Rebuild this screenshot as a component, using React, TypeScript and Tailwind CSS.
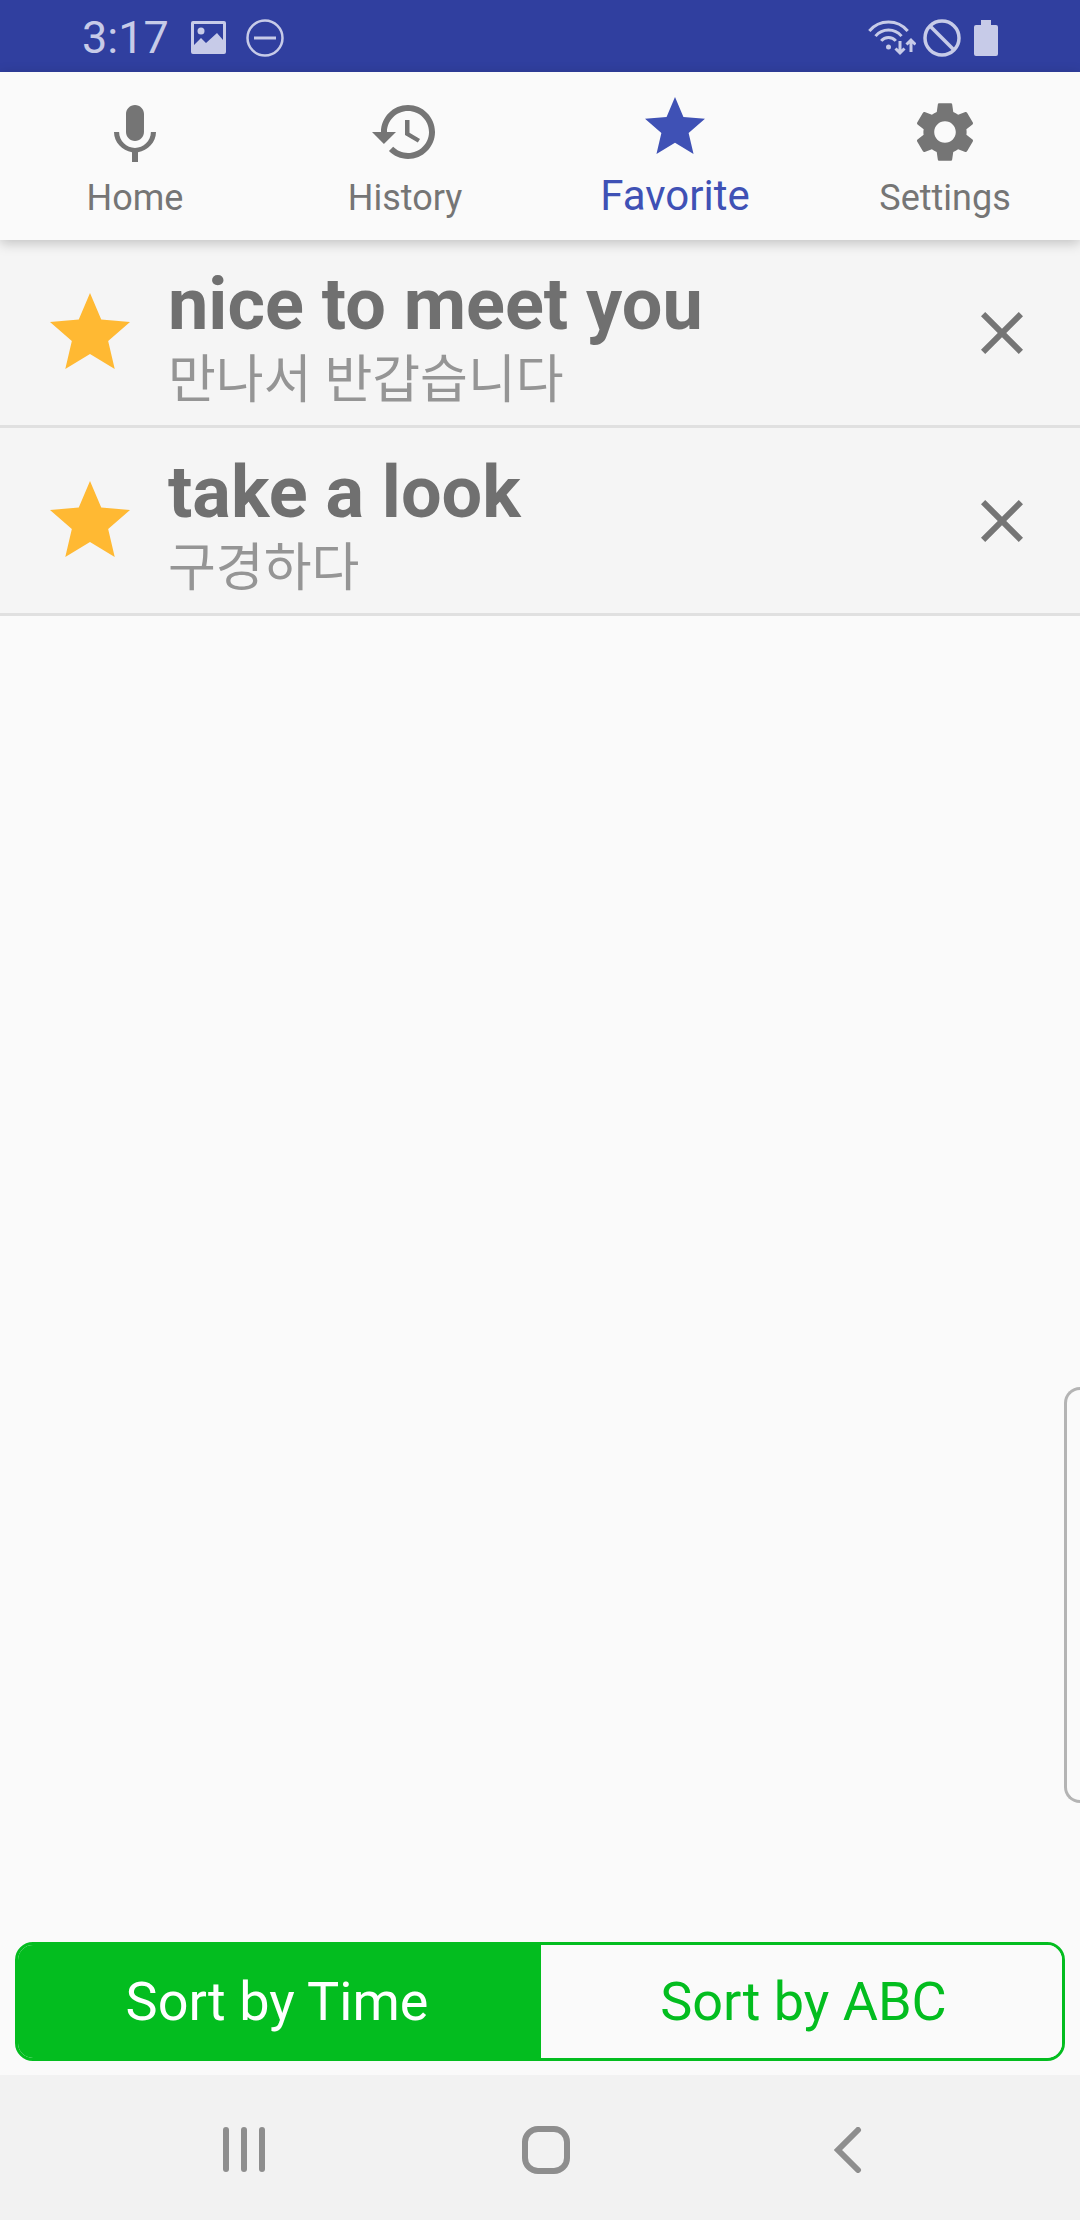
const tabs = [
  {
    label: "Home",
    viewBox: "0 -1 24 24",
    path: "M12 14c1.66 0 2.99-1.34 2.99-3L15 5c0-1.66-1.34-3-3-3S9 3.34 9 5v6c0 1.66 1.34 3 3 3zm5.3-3c0 3-2.54 5.3-5.3 5.3S6.7 14 6.7 11H5c0 3.41 2.72 6.23 6 6.72V21h2v-3.28c3.28-.49 6-3.31 6-6.72h-1.7z",
  },
  {
    label: "History",
    viewBox: "0 0 24 24",
    path: "M13 3c-4.97 0-9 4.03-9 9H1l3.89 3.89.07.14L9 12H6c0-3.87 3.13-7 7-7s7 3.13 7 7-3.13 7-7 7c-1.93 0-3.68-.79-4.94-2.06l-1.42 1.42C8.27 19.99 10.51 21 13 21c4.97 0 9-4.03 9-9s-4.03-9-9-9zm-1 5v5l4.28 2.54.72-1.21-3.5-2.08V8H12z",
  },
  {
    label: "Favorite",
    active: true,
    viewBox: "0 0 24 24",
    path: "M12 17.27L18.18 21l-1.64-7.03L22 9.24l-7.19-.61L12 2 9.19 8.63 2 9.24l5.46 4.73L5.82 21z",
  },
  {
    label: "Settings",
    viewBox: "0 0 24 24",
    path: "M19.14 12.94c.04-.3.06-.61.06-.94 0-.32-.02-.64-.07-.94l2.03-1.58c.18-.14.23-.41.12-.61l-1.92-3.32c-.12-.22-.37-.29-.59-.22l-2.39.96c-.5-.38-1.03-.7-1.62-.94l-.36-2.54c-.04-.24-.24-.41-.48-.41h-3.84c-.24 0-.43.17-.47.41l-.36 2.54c-.59.24-1.13.57-1.62.94l-2.39-.96c-.22-.08-.47 0-.59.22L2.74 8.87c-.12.21-.08.47.12.61l2.03 1.58c-.05.3-.09.63-.09.94s.02.64.07.94l-2.03 1.58c-.18.14-.23.41-.12.61l1.92 3.32c.12.22.37.29.59.22l2.39-.96c.5.38 1.03.7 1.62.94l.36 2.54c.05.24.24.41.48.41h3.84c.24 0 .44-.17.47-.41l.36-2.54c.59-.24 1.13-.56 1.62-.94l2.39.96c.22.08.47 0 .59-.22l1.92-3.32c.12-.22.07-.47-.12-.61l-2.01-1.58zM12 15.6c-1.98 0-3.6-1.62-3.6-3.6s1.62-3.6 3.6-3.6 3.6 1.62 3.6 3.6-1.62 3.6-3.6 3.6z",
  },
];

const favorites = [
  { word: "nice to meet you", meaning: "만나서 반갑습니다" },
  { word: "take a look", meaning: "구경하다" },
];

const starPath = "M12 17.27L18.18 21l-1.64-7.03L22 9.24l-7.19-.61L12 2 9.19 8.63 2 9.24l5.46 4.73L5.82 21z";

function StatusBar() {
  return (
    <div className="flex h-[72px] items-center justify-between bg-[#303f9f] pt-[3px] pl-[82px] pr-[82px] text-[#c7cbe8]">
      <div className="flex items-center">
        <span className="w-[109px] text-[45px] leading-none">3:17</span>
        <svg width="35" height="33" viewBox="0 0 35 33" className="fill-current">
          <path
            fillRule="evenodd"
            d="M2 0H33a2 2 0 0 1 2 2V31a2 2 0 0 1-2 2H2a2 2 0 0 1-2-2V2a2 2 0 0 1 2-2ZM3 3V24L10 17L15 22L26 12L32 19V3Z"
          />
          <circle cx="10" cy="10" r="3.5" />
        </svg>
        <svg width="38" height="38" viewBox="0 0 38 38" className="ml-[20px] fill-none stroke-current" strokeWidth="2.5">
          <circle cx="19" cy="19" r="17.5" />
          <path d="M8 19H30" strokeWidth="3" />
        </svg>
      </div>
      <div className="flex items-center">
        <svg width="48" height="36" viewBox="0 0 48 36" className="fill-none stroke-current" strokeWidth="3">
          <path d="M1.3 11A25 25 0 0 1 39.7 11" />
          <path d="M7.5 16.1A17 17 0 0 1 33.5 16.1" />
          <path d="M13.2 20.9A9.5 9.5 0 0 1 27.8 20.9" />
          <circle cx="20.5" cy="27" r="2.5" className="fill-current stroke-none" />
          <path d="M32 21V33M27.5 28.5L32 33L36.5 28.5" />
          <path d="M43 32V20M38.5 24.5L43 20L47.5 24.5" />
        </svg>
        <svg width="38" height="38" viewBox="0 0 38 38" className="ml-[7px] fill-none stroke-current" strokeWidth="3.5">
          <circle cx="19" cy="19" r="17" />
          <path d="M7 7L31 31" />
        </svg>
        <svg width="24" height="36" viewBox="0 0 24 36" className="ml-[13px] fill-current">
          <path d="M7 0H17V5H22a2 2 0 0 1 2 2V34a2 2 0 0 1-2 2H2a2 2 0 0 1-2-2V7a2 2 0 0 1 2-2H7Z" />
        </svg>
      </div>
    </div>
  );
}

function TabBar() {
  return (
    <div className="relative z-10 grid h-[168px] grid-cols-4 bg-[#fafafa] shadow-[0_3px_12px_rgba(0,0,0,0.22)]">
      {tabs.map((tab) => (
        <div
          key={tab.label}
          className={tab.active ? "flex flex-col items-center pt-[19px] text-[#3f51b5]" : "flex flex-col items-center pt-[24px] text-[#757575]"}
        >
          <svg width="72" height="72" viewBox={tab.viewBox} className="fill-current">
            <path d={tab.path} />
          </svg>
          <span className={tab.active ? "mt-[8px] text-[42px] leading-[50px]" : "mt-[9px] text-[36px] leading-[42px]"}>{tab.label}</span>
        </div>
      ))}
    </div>
  );
}

function FavoriteRow({ word, meaning }: { word: string; meaning: string }) {
  return (
    <div className="flex h-[188px] items-center border-b-[3px] border-[#e0e0e0] bg-[#f5f5f5] pl-[42px] pr-[42px]">
      <svg width="96" height="96" viewBox="0 0 24 24" className="shrink-0 fill-[#ffb933]">
        <path d={starPath} />
      </svg>
      <div className="ml-[30px] flex min-w-0 flex-1 flex-col pt-[6px]">
        <span className="text-[72px] font-bold leading-[84px] text-[#707070]">{word}</span>
        <span className="mt-[6px] text-[52px] leading-[55px] text-[#959595]">{meaning}</span>
      </div>
      <svg width="72" height="72" viewBox="0 0 24 24" className="shrink-0 fill-[#757575]">
        <path d="M19 6.41L17.59 5 12 10.59 6.41 5 5 6.41 10.59 12 5 17.59 6.41 19 12 13.41 17.59 19 19 17.59 13.41 12z" />
      </svg>
    </div>
  );
}

function SortToggle() {
  return (
    <div className="mx-[15px] mb-[14px] flex h-[119px] overflow-hidden rounded-[18px] border-[3px] border-[#03bd1f] text-[54px]">
      <div className="flex w-[523px] items-center justify-center bg-[#03bd1f] pr-[5px] text-white">Sort by Time</div>
      <div className="flex flex-1 items-center justify-center bg-[#fafafa] pl-[4px] text-[#03bd1f]">Sort by ABC</div>
    </div>
  );
}

function NavBar() {
  return (
    <div className="flex h-[145px] items-center justify-center bg-[#f2f2f2] pt-[4px] pl-3">
      <div className="flex w-[302px] justify-center gap-[12px]">
        <div className="h-[45px] w-[6px] rounded-full bg-[#8e8e8e]" />
        <div className="h-[45px] w-[6px] rounded-full bg-[#8e8e8e]" />
        <div className="h-[45px] w-[6px] rounded-full bg-[#8e8e8e]" />
      </div>
      <div className="flex w-[302px] justify-center">
        <div className="h-[48px] w-[48px] rounded-[16px] border-[6px] border-[#8e8e8e]" />
      </div>
      <div className="flex w-[302px] justify-center">
        <svg width="28" height="46" viewBox="0 0 28 46" className="fill-none stroke-[#8e8e8e]" strokeWidth="6" strokeLinecap="round" strokeLinejoin="miter">
          <path d="M24 3L4 23L24 43" />
        </svg>
      </div>
    </div>
  );
}

export default function App() {
  return (
    <div className="relative flex h-[2220px] w-[1080px] flex-col overflow-hidden bg-[#fafafa] font-['Roboto','Noto_Sans_CJK_KR',sans-serif]">
      <StatusBar />
      <TabBar />
      <div className="flex-1">
        {favorites.map((item) => (
          <FavoriteRow key={item.word} word={item.word} meaning={item.meaning} />
        ))}
      </div>
      <SortToggle />
      <NavBar />
      {/* edge panel handle */}
      <div className="absolute right-0 top-[1387px] h-[416px] w-[16px] rounded-l-[24px] border-y-[3px] border-l-[3px] border-[#b4b4b4]" />
    </div>
  );
}
